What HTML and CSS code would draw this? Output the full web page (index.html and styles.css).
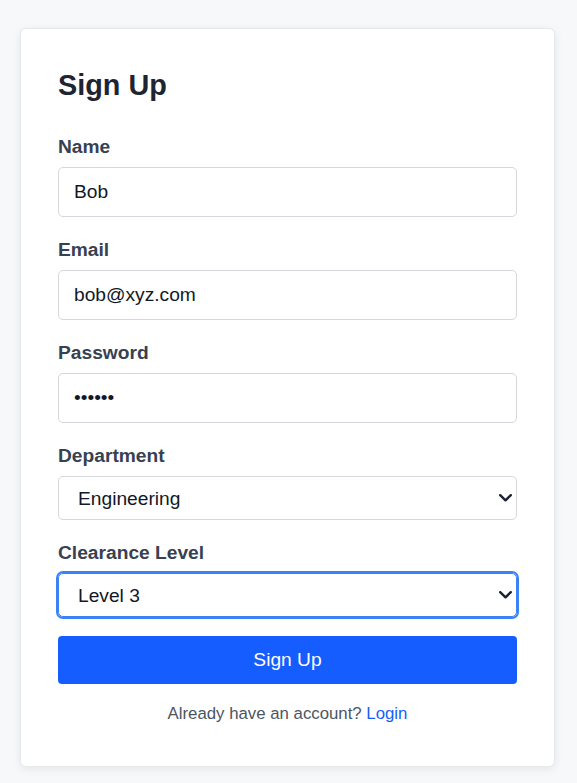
FILE: index.html
```html
<!DOCTYPE html>
<html lang="en">
<head>
<meta charset="utf-8">
<title>Sign Up</title>
<link rel="stylesheet" href="styles.css">
</head>
<body>
<div class="card">
  <h1 class="title">Sign Up</h1>
  <form class="form">
    <div class="field">
      <label class="label" for="name">Name</label>
      <input class="input" id="name" type="text" value="Bob">
    </div>
    <div class="field">
      <label class="label" for="email">Email</label>
      <input class="input" id="email" type="email" value="bob@xyz.com">
    </div>
    <div class="field">
      <label class="label" for="password">Password</label>
      <input class="input" id="password" type="password" value="secret">
    </div>
    <div class="field">
      <label class="label" for="dept">Department</label>
      <div class="select-wrap">
        <select class="select" id="dept">
          <option selected>Engineering</option>
          <option>Marketing</option>
          <option>Sales</option>
        </select>
        <svg class="chevron" width="13" height="8" viewBox="0 0 13 8" aria-hidden="true"><path d="M1.2 1.2 L6.5 6.3 L11.8 1.2" fill="none" stroke="#1b2230" stroke-width="2.4" stroke-linecap="round" stroke-linejoin="round"/></svg>
      </div>
    </div>
    <div class="field field-last">
      <label class="label" for="level">Clearance Level</label>
      <div class="select-wrap">
        <select class="select select-focus" id="level">
          <option>Level 1</option>
          <option>Level 2</option>
          <option selected>Level 3</option>
        </select>
        <svg class="chevron" width="13" height="8" viewBox="0 0 13 8" aria-hidden="true"><path d="M1.2 1.2 L6.5 6.3 L11.8 1.2" fill="none" stroke="#1b2230" stroke-width="2.4" stroke-linecap="round" stroke-linejoin="round"/></svg>
      </div>
    </div>
    <button class="button" type="button">Sign Up</button>
  </form>
  <p class="footer">Already have an account? <a class="link" href="#">Login</a></p>
</div>
</body>
</html>
```

FILE: styles.css
```css
* { box-sizing: border-box; }

html, body {
  margin: 0;
  padding: 0;
  background: #f7f8fa;
  font-family: "Liberation Sans", Arial, sans-serif;
}

body {
  padding: 28px 22px 18px 20px;
}

.card {
  background: #ffffff;
  border: 1px solid #e6e8eb;
  border-radius: 6px;
  box-shadow: 0 2px 8px rgba(0, 0, 0, 0.08);
  padding: 40px 37px 43px 37px;
}

.title {
  margin: 0 0 34px 0;
  font-size: 28.8px;
  font-weight: 700;
  color: #1d2533;
  line-height: 33px;
}

.form {
  margin: 0;
}

.field {
  display: flex;
  flex-direction: column;
  margin-bottom: 22px;
}

.field-last {
  margin-bottom: 19px;
}

.label {
  font-size: 19.2px;
  line-height: 22px;
  font-weight: 700;
  color: #374151;
  margin-bottom: 9px;
}

.input {
  height: 50px;
  width: 100%;
  border: 1px solid #d4d7dc;
  border-radius: 5px;
  padding: 0 15px;
  font-family: inherit;
  font-size: 19.2px;
  color: #111827;
  background: #ffffff;
}

.select-wrap {
  position: relative;
}

.select {
  display: block;
  height: 44px;
  width: 100%;
  border: 1px solid #d4d7dc;
  border-radius: 5px;
  padding: 0 40px 0 19px;
  font-family: inherit;
  font-size: 19.2px;
  color: #111827;
  background: #ffffff;
  -webkit-appearance: none;
  appearance: none;
}

.chevron {
  position: absolute;
  right: 5px;
  top: 50%;
  margin-top: -4px;
  pointer-events: none;
}

.select-focus {
  border-color: #3b82f6;
  outline: 2px solid #3b82f6;
  outline-offset: 0;
}

.button {
  display: block;
  width: 100%;
  height: 48px;
  border: none;
  border-radius: 4px;
  background: #165dff;
  color: #ffffff;
  font-family: inherit;
  font-size: 19.2px;
  cursor: pointer;
}

.footer {
  margin: 20px 0 0 0;
  text-align: center;
  font-size: 16.8px;
  line-height: 19px;
  color: #4b5563;
}

.link {
  color: #165dff;
  text-decoration: none;
}
```
